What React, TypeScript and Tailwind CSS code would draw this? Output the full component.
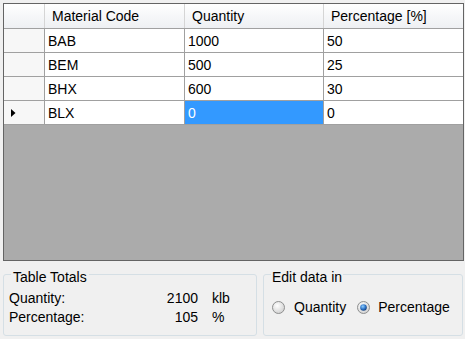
import React from 'react';

const rows = [
  { code: 'BAB', qty: '1000', pct: '50' },
  { code: 'BEM', qty: '500', pct: '25' },
  { code: 'BHX', qty: '600', pct: '30' },
  { code: 'BLX', qty: '0', pct: '0' },
];

const Radio: React.FC<{ checked?: boolean; id: string }> = ({ checked, id }) => (
  <svg width="13" height="13" viewBox="0 0 13 13">
    <defs>
      <radialGradient id={`bg-${id}`} cx="40%" cy="35%" r="70%">
        <stop offset="0%" stopColor="#ffffff" />
        <stop offset="100%" stopColor="#cfcfcf" />
      </radialGradient>
      <radialGradient id={`dot-${id}`} cx="40%" cy="35%" r="70%">
        <stop offset="0%" stopColor="#8fd0ff" />
        <stop offset="60%" stopColor="#2a6fc4" />
        <stop offset="100%" stopColor="#12386e" />
      </radialGradient>
    </defs>
    <circle cx="6.5" cy="6.5" r="6" fill={`url(#bg-${id})`} stroke="#8e8f8f" strokeWidth="1" />
    {checked && <circle cx="6.5" cy="6.5" r="3.3" fill={`url(#dot-${id})`} />}
  </svg>
);

export default function App() {
  return (
    <div
      className="w-[465px] h-[339px] bg-[#f0f0f0] text-[14px] text-black overflow-hidden pl-[3px] pt-[3px]"
      style={{ fontFamily: '"Liberation Sans", Arial, sans-serif' }}
    >
      {/* Grid */}
      <div className="w-[461px] h-[258px] border border-[#646464] bg-[#ababab] flex flex-col">
        {/* Header */}
        <div className="flex h-[25px] border-b border-[#a0a0a0] bg-[linear-gradient(to_bottom,#ffffff,#f6f7f9_50%,#eef0f3)]">
          <div className="w-[41px] border-r border-[#d5d5d5]" />
          <div className="w-[140px] border-r border-[#d5d5d5] pl-[7px] flex items-center leading-none">Material Code</div>
          <div className="w-[139px] border-r border-[#d5d5d5] pl-[7px] flex items-center leading-none">Quantity</div>
          <div className="w-[139px] pl-[7px] flex items-center leading-none">Percentage [%]</div>
        </div>

        {/* Rows */}
        {rows.map((r, i) => {
          const current = i === rows.length - 1;
          return (
            <div key={r.code} className="flex h-[24px] border-b border-[#a0a0a0] bg-white">
              <div className="w-[41px] border-r border-[#a0a0a0] bg-[#f7f7f7] flex items-center pl-[7px]">
                {current && (
                  <svg width="5" height="8" viewBox="0 0 5 8">
                    <path d="M0 0 L4.5 4 L0 8 Z" fill="#000" />
                  </svg>
                )}
              </div>
              <div className="w-[140px] border-r border-[#a0a0a0] pl-[3px] flex items-center leading-none">{r.code}</div>
              <div
                className={`w-[139px] border-r border-[#a0a0a0] pl-[3px] flex items-center leading-none ${
                  current ? 'bg-[#3399ff] text-white' : ''
                }`}
              >
                {r.qty}
              </div>
              <div className="w-[138px] pl-[3px] flex items-center leading-none">{r.pct}</div>
            </div>
          );
        })}
      </div>

      {/* Bottom panels */}
      <div className="flex gap-[6px] mt-[3px]">
        <fieldset className="w-[254px] h-[72px] border border-[#d5dfe5] rounded-[3px] pl-[5px]">
          <legend className="ml-[2px] px-[2px] pt-[5px] leading-[16px]">Table Totals</legend>
          <div className="flex flex-col gap-[3px] mt-[5px] leading-[16px]">
            <div className="flex">
              <span className="w-[141px]">Quantity:</span>
              <span className="w-[48px] text-right">2100</span>
              <span className="ml-[14px]">klb</span>
            </div>
            <div className="flex">
              <span className="w-[141px]">Percentage:</span>
              <span className="w-[48px] text-right">105</span>
              <span className="ml-[14px]">%</span>
            </div>
          </div>
        </fieldset>

        <fieldset className="w-[200px] h-[72px] border border-[#d5dfe5] rounded-[3px] pl-[8px]">
          <legend className="-ml-[1px] px-[1px] pt-[5px] leading-[16px]">Edit data in</legend>
          <div className="flex items-center mt-[14px] leading-[16px]">
            <Radio id="q" />
            <span className="ml-[9px]">Quantity</span>
            <span className="ml-[11px] flex"><Radio id="p" checked /></span>
            <span className="ml-[8px]">Percentage</span>
          </div>
        </fieldset>
      </div>
    </div>
  );
}
